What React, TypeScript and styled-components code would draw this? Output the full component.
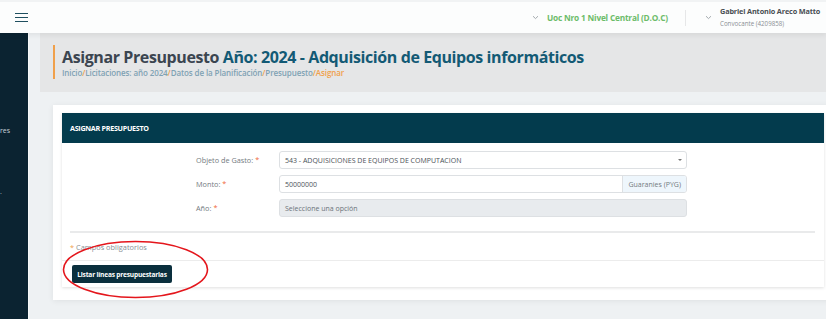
import styled, { createGlobalStyle } from 'styled-components';

const GlobalStyle = createGlobalStyle`
  html, body {
    margin: 0;
    padding: 0;
    background: #eef1f3;
    overflow: hidden;
  }
  body {
    font-family: "Open Sans", "Noto Sans", sans-serif;
  }
  * {
    box-sizing: border-box;
  }
`;

const Shell = styled.div`
  position: relative;
  display: grid;
  grid-template-rows: 33px 1fr;
  height: 319px;
  width: 826px;
  overflow: hidden;
`;

const TopBar = styled.header`
  position: relative;
  z-index: 2;
  display: flex;
  align-items: center;
  justify-content: space-between;
  background: #fcfdfd;
  border-top: 2px solid #f1f3f4;
  box-shadow: 0 2px 5px rgba(0, 0, 0, 0.07);
  padding: 0 0 0 15px;
`;

const Burger = styled.div`
  display: flex;
  flex-direction: column;
  gap: 2.7px;
  width: 13px;

  & > span {
    display: block;
    height: 1.4px;
    background: #1f4f5f;
  }
`;

const TopRight = styled.div`
  display: flex;
  align-items: center;
  height: 100%;
`;

const Chevron = styled.svg`
  width: 7px;
  height: 5px;
  margin-right: 8px;
  flex-shrink: 0;
`;

const UnitName = styled.span`
  font-size: 8.3px;
  font-weight: 700;
  color: #6cbc6a;
  white-space: nowrap;
  letter-spacing: -0.2px;
`;

const Divider = styled.div`
  width: 1px;
  height: 16px;
  background: #e6e7e8;
  margin: 0 19px 0 17px;
`;

const UserBox = styled.div`
  display: flex;
  flex-direction: column;
  gap: 3px;
  width: 106px;
  white-space: nowrap;
  margin-top: -2px;
`;

const UserName = styled.span`
  font-size: 7.3px;
  font-weight: 700;
  color: #4a4f54;
  letter-spacing: -0.15px;
`;

const UserRole = styled.span`
  font-size: 6.2px;
  color: #8a8f94;
`;

const Body = styled.div`
  display: flex;
  min-height: 0;
`;

const Sidebar = styled.nav`
  width: 29px;
  background: #0b2331;
  border-right: 1px solid #f7f8f9;
  overflow: hidden;
  display: flex;
  flex-direction: column;
  padding-top: 93px;
  gap: 54px;
`;

const SideLabel = styled.span`
  display: block;
  font-size: 7px;
  line-height: 9px;
  color: #c9d2d8;
  white-space: nowrap;
`;

const Gutter = styled.div`
  width: 11px;
  background: #eef1f3;
`;

const Main = styled.main`
  flex: 1;
  display: flex;
  flex-direction: column;
  min-width: 0;
`;

const PageHeader = styled.section`
  height: 59px;
  background: #e5e6e7;
  padding: 12px 13px 0;
`;

const TitleBlock = styled.div`
  border-left: 2px solid #f0a04b;
  padding-left: 7px;
  height: 34px;
  display: flex;
  flex-direction: column;
  justify-content: center;
`;

const Title = styled.h1`
  margin: 0;
  font-size: 16px;
  font-weight: 700;
  line-height: 20px;
  color: #3b4550;
  white-space: nowrap;
  letter-spacing: -0.4px;

  & > span {
    color: #135a75;
  }
`;

const Crumbs = styled.div`
  font-size: 8px;
  font-weight: 600;
  color: #7fa2b4;
  line-height: 11px;
  white-space: nowrap;
  letter-spacing: -0.1px;
`;

const Sep = styled.span`
  color: #f0a04b;
`;

const Content = styled.div`
  flex: 1;
  padding: 13px 0 0 13px;
`;

const OuterCard = styled.div`
  background: #fff;
  margin-right: -12px;
  padding: 8px 14px 13px 9px;
  box-shadow: 0 1px 6px rgba(0, 0, 0, 0.07);
`;

const Card = styled.div`
  background: #fff;
  box-shadow: 0 1px 3px rgba(0, 0, 0, 0.13);
`;

const CardHeader = styled.div`
  height: 30px;
  background: #033b4d;
  display: flex;
  align-items: center;
  padding-left: 8px;
  color: #fff;
  font-size: 7.2px;
  font-weight: 700;
  letter-spacing: -0.3px;
`;

const CardBody = styled.div`
  padding: 8px 9px 7px 8px;
`;

const FormGrid = styled.div`
  display: grid;
  grid-template-columns: 126px 83px 408px;
  row-gap: 6px;
  align-items: center;
`;

const Label = styled.label`
  grid-column: 2;
  font-size: 7.3px;
  color: #737a80;
  white-space: nowrap;
`;

const Req = styled.span`
  color: #f0683a;
  margin-left: 2px;
`;

const Field = styled.div<{ $disabled?: boolean }>`
  grid-column: 3;
  height: 18px;
  display: flex;
  align-items: center;
  justify-content: space-between;
  border: 1px solid #dde0e3;
  border-radius: 3px;
  background: ${(p) => (p.$disabled ? '#e8ebee' : '#fff')};
  padding-left: 5px;
  font-size: 7px;
  color: ${(p) => (p.$disabled ? '#6c737a' : '#4b5157')};
  white-space: nowrap;
  overflow: hidden;
`;

const Caret = styled.span`
  width: 0;
  height: 0;
  border-left: 2px solid transparent;
  border-right: 2px solid transparent;
  border-top: 2.5px solid #777;
  margin-right: 4px;
`;

const Addon = styled.span`
  height: 100%;
  display: flex;
  align-items: center;
  padding: 0 5px;
  background: #eef6fc;
  border-left: 1px solid #dde0e3;
  color: #737a80;
  font-size: 7px;
`;

const Rule = styled.hr`
  border: none;
  height: 2px;
  background: #e9eaeb;
  margin: 14px 0 0;
`;

const Note = styled.div`
  margin-top: 8px;
  font-size: 7.4px;
  color: #8a9096;
  line-height: 12px;

  & > b {
    color: #f0a04b;
    font-weight: 400;
    margin-right: 2px;
  }
`;

const CardFooter = styled.div`
  display: flex;
  align-items: center;
  border-top: 1px solid #ececec;
  padding: 4px 10px;
`;

const Button = styled.button`
  display: block;
  height: 18px;
  width: 100px;
  border: none;
  border-radius: 2px;
  background: #0a2f3d;
  color: #fff;
  font-family: inherit;
  font-size: 6.6px;
  font-weight: 700;
  letter-spacing: -0.2px;
  padding: 0;
  white-space: nowrap;
`;

const Annotation = styled.svg`
  position: absolute;
  left: 61px;
  top: 239px;
  width: 149px;
  height: 61px;
  pointer-events: none;
`;

const ChevronDown = () => (
  <Chevron viewBox="0 0 7 5">
    <path d="M1 1.2 L3.5 3.6 L6 1.2" fill="none" stroke="#9aa0a5" strokeWidth="0.9" />
  </Chevron>
);

export default function App() {
  return (
    <>
      <GlobalStyle />
      <Shell>
        <TopBar>
          <Burger>
            <span />
            <span />
            <span />
          </Burger>
          <TopRight>
            <ChevronDown />
            <UnitName>Uoc Nro 1 Nivel Central (D.O.C)</UnitName>
            <Divider />
            <ChevronDown />
            <UserBox>
              <UserName>Gabriel Antonio Areco Matto</UserName>
              <UserRole>Convocante (4209858)</UserRole>
            </UserBox>
          </TopRight>
        </TopBar>
        <Body>
          <Sidebar>
            <SideLabel>res</SideLabel>
            <SideLabel>·</SideLabel>
          </Sidebar>
          <Gutter />
          <Main>
            <PageHeader>
              <TitleBlock>
                <Title>
                  Asignar Presupuesto <span>Año: 2024 - Adquisición de Equipos informáticos</span>
                </Title>
                <Crumbs>
                  Inicio<Sep>/</Sep>Licitaciones: año 2024<Sep>/</Sep>Datos de la Planificación
                  <Sep>/</Sep>Presupuesto<Sep>/</Sep>
                  <Sep>Asignar</Sep>
                </Crumbs>
              </TitleBlock>
            </PageHeader>
            <Content>
              <OuterCard>
                <Card>
                  <CardHeader>ASIGNAR PRESUPUESTO</CardHeader>
                  <CardBody>
                    <FormGrid>
                      <Label>
                        Objeto de Gasto:<Req>*</Req>
                      </Label>
                      <Field>
                        543 - ADQUISICIONES DE EQUIPOS DE COMPUTACION
                        <Caret />
                      </Field>
                      <Label>
                        Monto:<Req>*</Req>
                      </Label>
                      <Field>
                        50000000
                        <Addon>Guaranies (PYG)</Addon>
                      </Field>
                      <Label>
                        Año:<Req>*</Req>
                      </Label>
                      <Field $disabled>Seleccione una opción</Field>
                    </FormGrid>
                    <Rule />
                    <Note>
                      <b>*</b>Campos obligatorios
                    </Note>
                  </CardBody>
                  <CardFooter>
                    <Button>Listar líneas presupuestarias</Button>
                  </CardFooter>
                </Card>
              </OuterCard>
            </Content>
          </Main>
        </Body>
        <Annotation viewBox="0 0 149 61">
          <ellipse cx="74.5" cy="30.5" rx="72" ry="28" fill="none" stroke="#e4161c" strokeWidth="1.6" />
        </Annotation>
      </Shell>
    </>
  );
}
